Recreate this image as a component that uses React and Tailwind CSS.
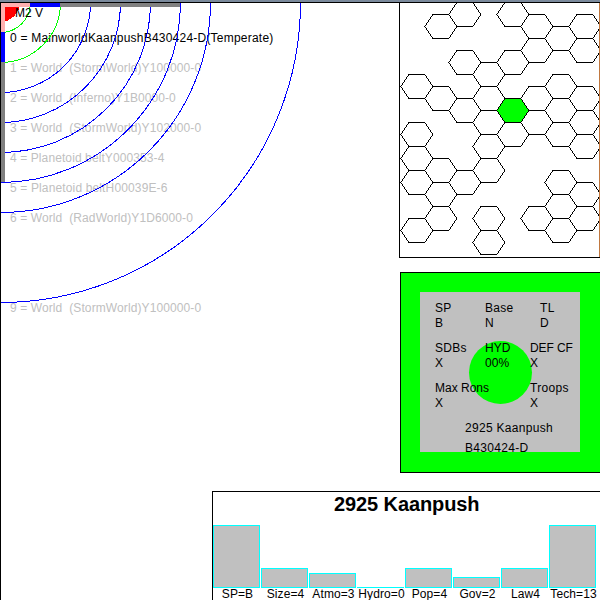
const ORBITS = [
  [30, "#00ff00"], [60, "#00ff00"], [90, "#0000ff"], [120, "#0000ff"],
  [150, "#0000ff"], [180, "#0000ff"], [210, "#0000ff"], [300, "#0000ff"],
];

const WORLDS = [
  ["1 = World  (StormWorld)Y100000-0", "tracking-[0.1px]"],
  ["2 = World  (Inferno)Y1B0000-0", "tracking-[0.08px]"],
  ["3 = World  (StormWorld)Y102000-0", "tracking-[0.1px]"],
  ["4 = Planetoid beltY000353-4", "tracking-[0.1px]"],
  ["5 = Planetoid beltH00039E-6", "tracking-[0.14px]"],
  ["6 = World  (RadWorld)Y1D6000-0", "tracking-[0.1px]"],
  ["", ""],
  ["", ""],
  ["9 = World  (StormWorld)Y100000-0", "tracking-[0.1px]"],
];

// Hex rows per column, as centre heights inside the sector map
const COLUMNS = [
  [83, 131, 155, 179, 227],
  [23, 95, 167, 191, 215],
  [11, 59, 107, 179],
  [71, 95, 119, 143, 167, 215, 239],
  [11, 59, 131],
  [23, 47, 95, 119, 215],
  [35, 83, 107, 131, 179, 203, 227],
  [23, 47, 95, 119, 143, 191, 215],
];

const BARS = [
  ["SP=B", 63], ["Size=4", 20], ["Atmo=3", 15], ["Hydro=0", 1],
  ["Pop=4", 20], ["Gov=2", 11], ["Law4", 20], ["Tech=13", 63],
];

function hex(cx, cy) {
  return `${cx - 16},${cy} ${cx - 8},${cy - 12} ${cx + 8},${cy - 12} ${cx + 16},${cy} ${cx + 8},${cy + 12} ${cx - 8},${cy + 12}`;
}

function SystemMap() {
  return (
    <section className="relative h-[488px] w-[398px] overflow-hidden">
      <svg className="absolute left-0 top-0 z-10" width="398" height="488" shapeRendering="crispEdges">
        <circle cx="-1" cy="-1" r="20" fill="#ff0000" />
        {ORBITS.map(([r, color]) => (
          <circle key={r} cx="-0.5" cy="-0.5" r={r} fill="none" stroke={color} />
        ))}
        <rect x="0" y="0" width="179" height="4" fill="#808080" />
        <rect x="0" y="0" width="4" height="179" fill="#808080" />
        <rect x="0" y="0" width="59" height="4" fill="#0000ff" />
        <rect x="0" y="0" width="4" height="59" fill="#0000ff" />
        <rect x="0" y="0" width="29" height="4" fill="#ffafaf" />
        <rect x="0" y="0" width="4" height="29" fill="#ffafaf" />
      </svg>
      <div className="whitespace-pre pl-[9px] text-[12px] leading-[30px]">
        <div className="relative z-20 h-[20px] pl-[5px] leading-[20px]">M2 V</div>
        <div className="h-[30px] leading-[30px] tracking-[0.22px]">0 = MainworldKaanpushB430424-D(Temperate)</div>
        {WORLDS.map(([label, tracking], i) => (
          <div key={i} className={`h-[30px] text-[#c0c0c0] ${tracking}`}>{label}</div>
        ))}
      </div>
    </section>
  );
}

function SectorMap() {
  return (
    <section className="flex h-[255px] w-[201px] border-b border-l border-black">
      <svg className="block" width="199" height="254" shapeRendering="crispEdges">
        <g fill="none" stroke="#000">
          {COLUMNS.map((rows, c) =>
            rows.map((y) => <polygon key={`${c}-${y}`} points={hex(16.9 + c * 24, y + 0.5)} />)
          )}
          <polygon points={hex(112.9, 107.5)} fill="#00ff00" stroke="none" />
          <polygon points={hex(112.9, 107.5)} />
        </g>
      </svg>
      <div className="h-[254px] w-px bg-[#c07840]" />
    </section>
  );
}

function Field({ label, value, className }) {
  return (
    <div className={className}>
      <div>{label}</div>
      <div>{value}</div>
    </div>
  );
}

function WorldCard() {
  return (
    <section className="ml-px mt-[14px] h-[201px] w-[200px] border-y border-l border-black bg-[#00ff00] pl-[19px] pt-[19px]">
      <div className="relative h-[160px] w-[160px] bg-[#c0c0c0]">
        <div className="absolute left-[49px] top-[49px] h-[63px] w-[63px] rounded-full bg-[#00ff00]" />
        <div className="relative whitespace-nowrap pl-[15px] pt-[9px] text-[12px] leading-[15px] tracking-[0.3px]">
          <div className="flex h-[40px]">
            <Field label="SP" value="B" className="w-[50px]" />
            <Field label="Base" value="N" className="w-[55px]" />
            <Field label="TL" value="D" />
          </div>
          <div className="flex h-[40px]">
            <Field label="SDBs" value="X" className="w-[50px]" />
            <Field label="HYD" value="00%" className="w-[45px] tracking-[0.1px]" />
            <Field label="DEF CF" value="X" className="tracking-[-0.1px]" />
          </div>
          <div className="flex h-[37px]">
            <Field label="Max Rons" value="X" className="w-[95px] tracking-[0px]" />
            <Field label="Troops" value="X" />
          </div>
          <div className="pl-[30px] leading-[20px]">
            <div>2925 Kaanpush</div>
            <div>B430424-D</div>
          </div>
        </div>
      </div>
    </section>
  );
}

function ProfileChart() {
  return (
    <section className="ml-[211px] h-[109px] border-l border-t border-black">
      <h1 className="h-[33px] pl-[121px] text-[20px] font-bold leading-[24px] tracking-[-0.1px]">2925 Kaanpush</h1>
      <div className="flex h-[63px] items-end gap-px">
        {BARS.map(([label, height]) => (
          <div key={label} className="w-[47px] shrink-0 border-l border-r border-t border-[#00ffff] bg-[#c0c0c0] shadow-[inset_0_-1px_0_#00ffff]" style={{ height }} />
        ))}
      </div>
      <div className="flex gap-px whitespace-nowrap pl-px text-[12px] leading-[13px] tracking-[0.1px]">
        {BARS.map(([label]) => (
          <div key={label} className="flex w-[47px] shrink-0 justify-center">{label}</div>
        ))}
      </div>
    </section>
  );
}

export default function App() {
  return (
    <main className="h-[600px] w-[600px] overflow-hidden bg-white font-['Liberation_Sans',sans-serif] text-black">
      <div className="h-[3px] border-b border-black bg-[#7b8a9c]" />
      <div className="h-[597px] border-l border-black">
        <div className="flex">
          <SystemMap />
          <div>
            <SectorMap />
            <WorldCard />
          </div>
        </div>
        <ProfileChart />
      </div>
    </main>
  );
}
